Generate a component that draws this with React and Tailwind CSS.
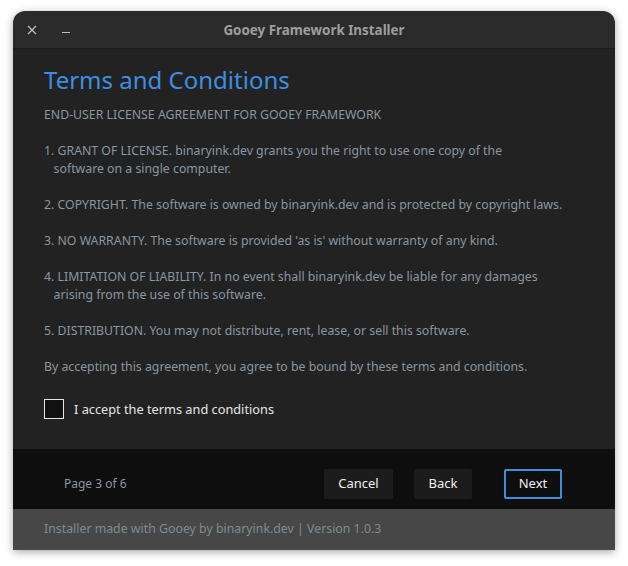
export default function App() {
  const body = `END-USER LICENSE AGREEMENT FOR GOOEY FRAMEWORK

1. GRANT OF LICENSE. binaryink.dev grants you the right to use one copy of the
   software on a single computer.

2. COPYRIGHT. The software is owned by binaryink.dev and is protected by copyright laws.

3. NO WARRANTY. The software is provided 'as is' without warranty of any kind.

4. LIMITATION OF LIABILITY. In no event shall binaryink.dev be liable for any damages
   arising from the use of this software.

5. DISTRIBUTION. You may not distribute, rent, lease, or sell this software.

By accepting this agreement, you agree to be bound by these terms and conditions.`;
  return (
    <div className="w-[628px] h-[566px] bg-white pt-[11px] pl-[13px] font-['Noto_Sans',sans-serif]">
      <div className="w-[602px] h-[539px] flex flex-col rounded-t-[12px] overflow-hidden shadow-[0_2px_8px_rgba(0,0,0,0.35)]">
        <div className="h-[38px] shrink-0 bg-[#2b2b2b] border-b border-[#1c1c1c] flex items-center relative">
          <svg className="absolute left-[14px] top-[14px]" width="10" height="10" viewBox="0 0 10 10">
            <path d="M1 1 L9 9 M9 1 L1 9" stroke="#bdbdbd" strokeWidth="1.3" />
          </svg>
          <svg className="absolute left-[48px] top-[15px]" width="10" height="10" viewBox="0 0 10 10">
            <path d="M1 6.5 H9" stroke="#bdbdbd" strokeWidth="1.2" />
          </svg>
          <div className="flex-1 pt-[2px] text-center text-[13.4px] font-bold text-[#9e9e9e]">Gooey Framework Installer</div>
        </div>
        <div className="h-[400px] shrink-0 bg-[#222222] pl-[31px] pt-[15px]">
          <div className="text-[24px] leading-[32px] text-[#3d8fe0]">Terms and Conditions</div>
          <div className="mt-[10px] whitespace-pre text-[12.3px] leading-[18px] text-[#8897a2]">{body}</div>
          <div className="mt-[23px] flex items-center gap-[10px]">
            <div className="w-[20px] h-[20px] border border-[#e6e6e6] bg-[#111111]" />
            <span className="text-[12.75px] leading-[20px] text-[#e6e6e6]">I accept the terms and conditions</span>
          </div>
        </div>
        <div className="h-[60px] shrink-0 bg-[#0e0e0e] flex items-start pt-[20px] pl-[51px]">
          <span className="text-[12px] leading-[30px] text-[#8897a2] w-[260px]">Page 3 of 6</span>
          <button className="w-[69px] h-[30px] bg-[#1c1c1c] rounded-[2px] text-[13px] text-[#f0f0f0]">Cancel</button>
          <button className="ml-[21px] w-[58px] h-[30px] bg-[#1c1c1c] rounded-[2px] text-[13px] text-[#f0f0f0]">Back</button>
          <button className="ml-[32px] w-[58px] h-[30px] border-2 border-[#3d8fe0] rounded-[2px] text-[13px] text-[#f0f0f0]">Next</button>
        </div>
        <div className="flex-1 bg-[#474747] flex items-center pl-[31px]">
          <span className="text-[12.33px] text-[#7d8b96]">Installer made with Gooey by binaryink.dev | Version 1.0.3</span>
        </div>
      </div>
    </div>
  );
}
